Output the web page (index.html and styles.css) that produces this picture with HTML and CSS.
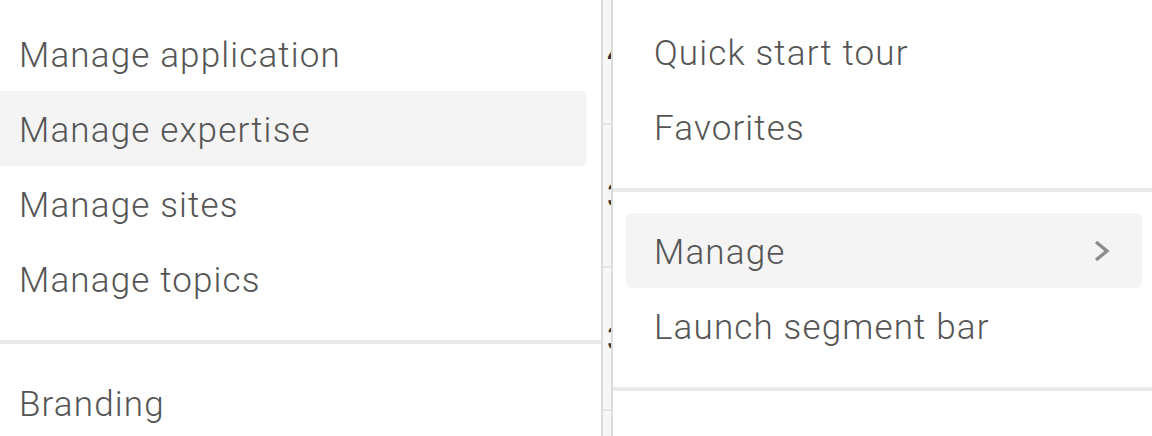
FILE: index.html
```html
<!DOCTYPE html>
<html lang="en">
<head>
    <meta charset="UTF-8">
    <title>Menu</title>
    <link rel="stylesheet" href="styles.css">
</head>
<body>
<div class="screen">
    <div class="menu menu-left">
        <ul class="menu-group">
            <li class="menu-item">Manage application</li>
            <li class="menu-item active">Manage expertise</li>
            <li class="menu-item">Manage sites</li>
            <li class="menu-item">Manage topics</li>
        </ul>
        <div class="menu-divider"></div>
        <ul class="menu-group">
            <li class="menu-item">Branding</li>
        </ul>
    </div>

    <div class="table-strip">
        <div class="table-row first"><span>4</span></div>
        <div class="table-row"><span>3</span></div>
        <div class="table-row"><span>3</span></div>
        <div class="table-row"><span></span></div>
    </div>

    <div class="menu menu-right">
        <ul class="menu-group">
            <li class="menu-item">Quick start tour</li>
            <li class="menu-item">Favorites</li>
        </ul>
        <div class="menu-divider"></div>
        <ul class="menu-group">
            <li class="menu-item active">
                <span>Manage</span>
                <svg class="chevron" width="16" height="22" viewBox="0 0 16 22">
                    <polyline points="2,2 13,11 2,20" fill="none" stroke="#8c8c8c" stroke-width="3.4"/>
                </svg>
            </li>
            <li class="menu-item">Launch segment bar</li>
        </ul>
        <div class="menu-divider"></div>
    </div>
</div>
</body>
</html>
```

FILE: styles.css
```css
* {
    margin: 0;
    padding: 0;
    list-style: none;
    box-sizing: border-box;
}

body {
    background: #fff;
    font-family: Roboto, "Liberation Sans", Arial, sans-serif;
    overflow: hidden;
}

.screen {
    display: flex;
    height: 436px;
    overflow: hidden;
}

.menu {
    background: #fff;
    flex-shrink: 0;
}
.menu-left {
    width: 626px;
    margin-left: -23px;
    padding: 16px 14px 0 14px;
    border-right: 2px solid #dcdcdc;
}
.menu-right {
    width: 541px;
    padding: 14px 10px 0 13px;
    border-left: 2px solid #dcdcdc;
}

.menu-item {
    display: flex;
    justify-content: space-between;
    align-items: center;
    height: 75px;
    padding: 6px 32px 0 28px;
    font-size: 35px;
    font-weight: 300;
    letter-spacing: 1.15px;
    line-height: 1.17;
    color: #555;
    border-radius: 6px;
    white-space: nowrap;
}
.menu-item.active {
    background: #f4f4f4;
}
.chevron {
    margin-bottom: 6px;
}

.menu-divider {
    height: 4px;
    background: #ebebeb;
    margin: 24px -14px 21px -14px;
}
.menu-right .menu-divider {
    margin: 24px -10px 21px -13px;
}

.table-strip {
    width: 8px;
    flex-shrink: 0;
    background: #f7f7f7;
    overflow: hidden;
}
.table-row {
    height: 143px;
    border-bottom: 2px solid #e4e4e4;
    padding-left: 4px;
    font-size: 34px;
    line-height: 141px;
    font-weight: 500;
    color: #333;
    white-space: nowrap;
}
.table-row.first {
    margin-top: -18px;
}
```
